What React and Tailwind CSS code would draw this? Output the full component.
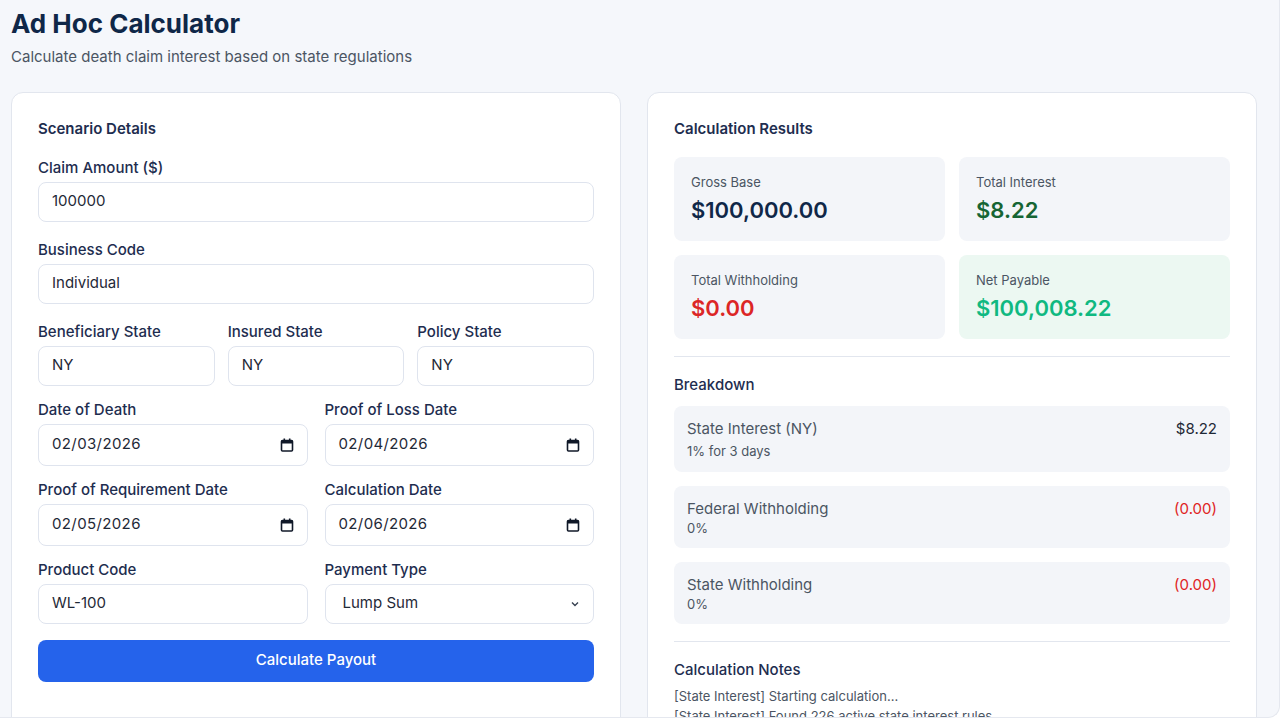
const font = { fontFamily: "Inter, 'Noto Sans', sans-serif" };

function Cal() {
  return (
    <svg width="14" height="14" viewBox="0 0 14 14" className="text-gray-900">
      <rect x="1.5" y="2.5" width="11" height="10.5" rx="1" fill="none" stroke="currentColor" strokeWidth="1.6" />
      <rect x="1.5" y="2.5" width="11" height="3" fill="currentColor" />
      <rect x="3.5" y="0.5" width="1.6" height="2.5" fill="currentColor" />
      <rect x="8.9" y="0.5" width="1.6" height="2.5" fill="currentColor" />
    </svg>
  );
}

function Field({ label, value, date, select, className = "" }) {
  return (
    <div className={"flex flex-col " + className}>
      <label className="mb-[4px] h-5 text-[15px] font-medium leading-5 text-[#1e2d4f]">{label}</label>
      <div className={"flex items-center justify-between rounded-lg border border-[#dfe4ee] bg-white px-[13px] text-[15px] text-[#1f2937] " + (date ? "h-[42px]" : "h-10")}>
        <span className={date ? "tracking-wide" : select ? "pl-1" : ""}>{value}</span>
        {date && <Cal />}
        {select && (
          <svg width="10" height="10" viewBox="0 0 10 10" fill="none" stroke="#374151" strokeWidth="1.4">
            <path d="M2 3.5 5 6.5 8 3.5" />
          </svg>
        )}
      </div>
    </div>
  );
}

function Tile({ label, value, color, bg = "bg-[#f3f5f9]" }) {
  return (
    <div className={"flex h-[84px] flex-col justify-center rounded-lg px-[17px] " + bg}>
      <div className="text-[13px] text-[#4b5563]">{label}</div>
      <div className={"mt-1 text-[22px] font-semibold leading-7 " + color}>{value}</div>
    </div>
  );
}

function Item({ title, sub, amount, red, tall }) {
  return (
    <div className={"flex justify-between rounded-lg bg-[#f3f5f9] px-[13px] " + (tall ? "h-[66px] pt-[13px]" : "h-[62px] pt-[13px]")}>
      <div>
        <div className="text-[15px] leading-5 text-[#4b5563]">{title}</div>
        <div className={"text-[13px] text-[#4b5563] " + (tall ? "mt-[3px]" : "")}>{sub}</div>
      </div>
      <div className={"text-[15px] leading-5 " + (red ? "text-[#e02424]" : "text-[#1f2937]")}>{amount}</div>
    </div>
  );
}

export default function App() {
  return (
    <div style={font} className="h-[720px] w-[1280px] overflow-hidden bg-white">
      <div className="h-[718px] overflow-hidden rounded-br-xl border-b border-r border-[#e5e8ef] bg-[#f5f7fb] px-[11px]">
        <h1 className="pt-[8px] text-[26px] font-bold leading-8 text-[#0f2748]">Ad Hoc Calculator</h1>
        <p className="mt-[6px] text-[15px] text-[#4b5563]">Calculate death claim interest based on state regulations</p>
        <div className="mt-[23px] grid grid-cols-[610px_610px] gap-[26px]">
          <div className="h-[700px] rounded-xl border border-[#e2e6ee] bg-white px-[26px] pt-[26px]">
            <h2 className="mb-[19px] text-[15px] font-semibold leading-5 text-[#1e2d4f]">Scenario Details</h2>
            <div className="flex flex-col gap-[18px]">
              <Field label="Claim Amount ($)" value="100000" />
              <Field label="Business Code" value="Individual" />
              <div className="grid grid-cols-3 gap-[13px]">
                <Field label="Beneficiary State" value="NY" />
                <Field label="Insured State" value="NY" />
                <Field label="Policy State" value="NY" />
              </div>
              <div className="-mt-[4px] grid grid-cols-2 gap-[17px]">
                <Field label="Date of Death" value="02/03/2026" date />
                <Field label="Proof of Loss Date" value="02/04/2026" date />
              </div>
              <div className="-mt-[4px] grid grid-cols-2 gap-[17px]">
                <Field label="Proof of Requirement Date" value="02/05/2026" date />
                <Field label="Calculation Date" value="02/06/2026" date />
              </div>
              <div className="-mt-[4px] grid grid-cols-2 gap-[17px]">
                <Field label="Product Code" value="WL-100" />
                <Field label="Payment Type" value="Lump Sum" select />
              </div>
              <button className="-mt-[2px] h-[42px] rounded-lg bg-[#2563eb] text-[15px] font-medium text-white">Calculate Payout</button>
            </div>
          </div>
          <div className="h-[700px] rounded-xl border border-[#e2e6ee] bg-white px-[26px] pt-[26px]">
            <h2 className="mb-[18px] text-[15px] font-semibold leading-5 text-[#1e2d4f]">Calculation Results</h2>
            <div className="grid grid-cols-2 gap-[14px]">
              <Tile label="Gross Base" value="$100,000.00" color="text-[#0f2748]" />
              <Tile label="Total Interest" value="$8.22" color="text-[#166534]" />
              <Tile label="Total Withholding" value="$0.00" color="text-[#dc2626]" />
              <Tile label="Net Payable" value="$100,008.22" color="text-[#10b981]" bg="bg-[#ecf8f2]" />
            </div>
            <div className="mt-[17px] border-t border-[#e2e6ee]" />
            <h3 className="mt-[18px] text-[15px] font-medium leading-5 text-[#1e2d4f]">Breakdown</h3>
            <div className="mt-[11px] flex flex-col gap-[14px]">
              <Item title="State Interest (NY)" sub="1% for 3 days" amount="$8.22" tall />
              <Item title="Federal Withholding" sub="0%" amount="(0.00)" red />
              <Item title="State Withholding" sub="0%" amount="(0.00)" red />
            </div>
            <div className="mt-[17px] border-t border-[#e2e6ee]" />
            <h3 className="mt-[18px] text-[15px] font-medium leading-5 text-[#1e2d4f]">Calculation Notes</h3>
            <div className="mt-[6px] text-[13px] leading-5 text-[#4b5563]">
              <div>[State Interest] Starting calculation...</div>
              <div>[State Interest] Found 226 active state interest rules</div>
            </div>
          </div>
        </div>
      </div>
    </div>
  );
}
